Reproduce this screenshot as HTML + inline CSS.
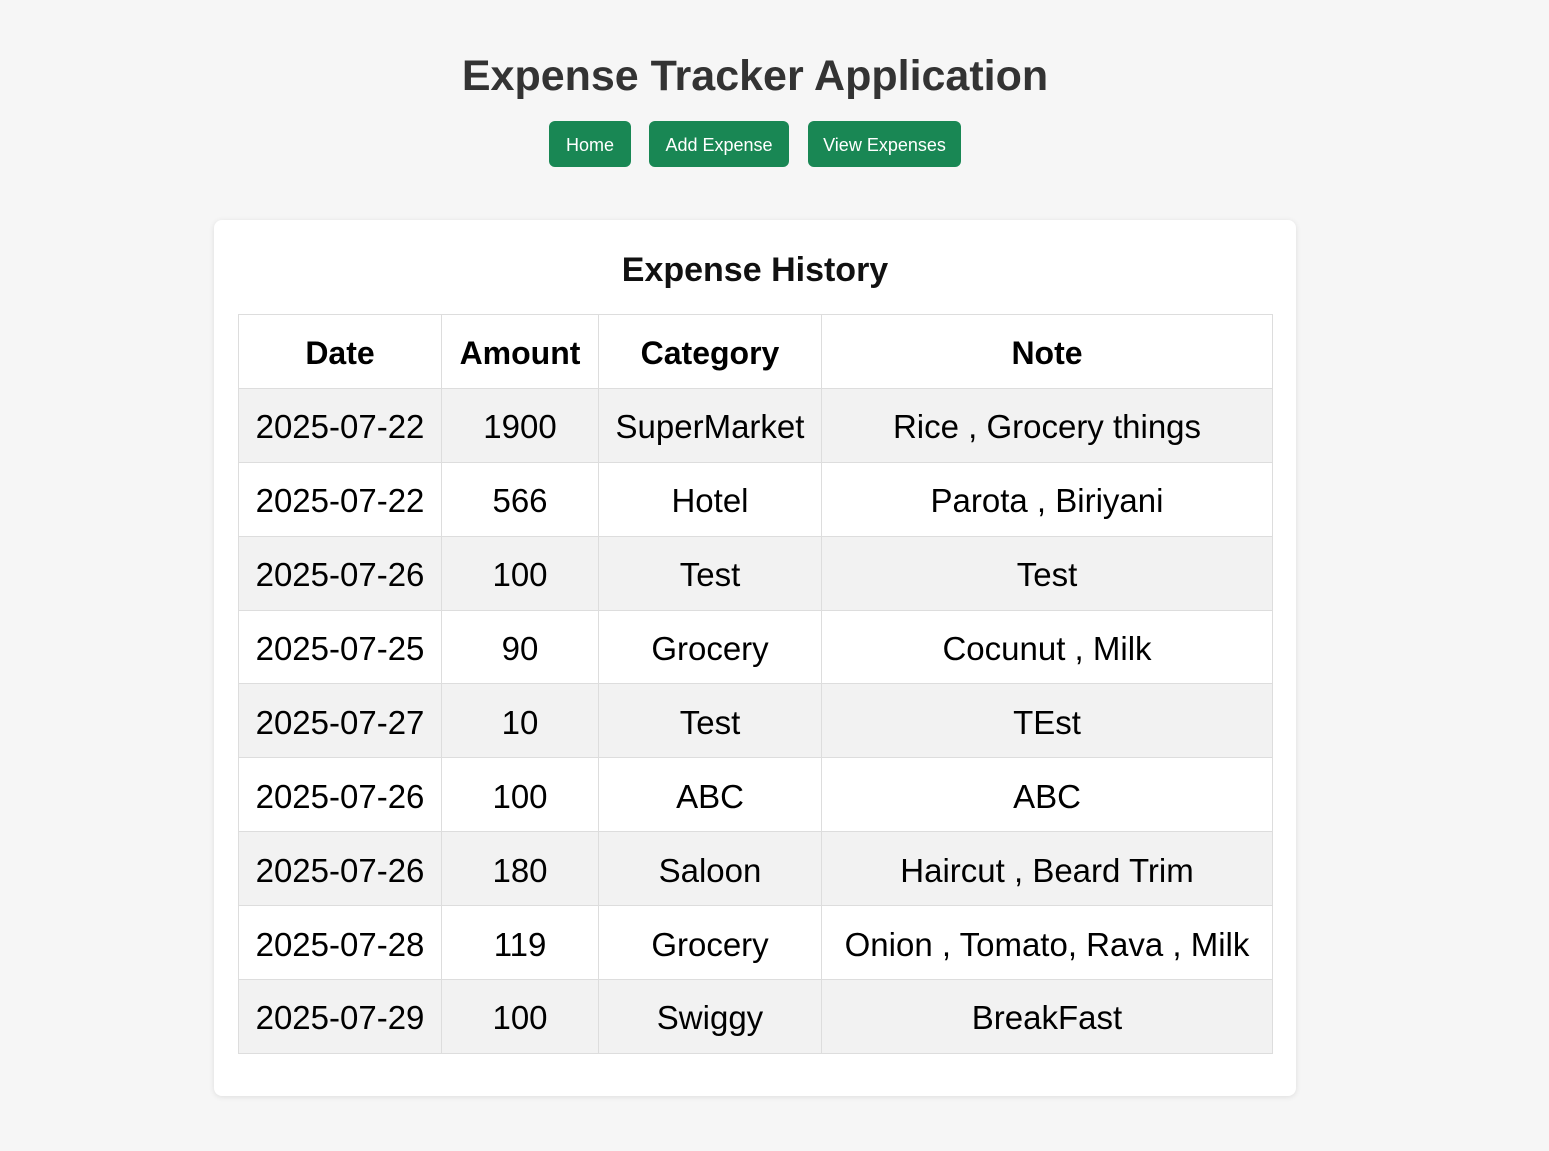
<!DOCTYPE html>
<html><head><meta charset="utf-8"><style>
html,body{margin:0;padding:0;background:#f6f6f6;font-family:"Liberation Sans",sans-serif;}
body{width:1549px;height:1151px;position:relative;overflow:hidden;}
h1{position:absolute;left:0;right:39px;top:47px;margin:0;text-align:center;font-size:43px;font-weight:bold;color:#333;line-height:58px;}
.btn{position:absolute;top:121px;height:46px;line-height:48px;background:#198754;color:#fff;border-radius:6px;font-size:18px;text-align:center;}
.card{position:absolute;left:214px;top:220px;width:1082px;height:876px;background:#fff;border-radius:8px;box-shadow:0 1px 6px rgba(0,0,0,.1);}
h2{position:absolute;left:0;right:39px;top:246px;margin:0;text-align:center;font-size:34px;font-weight:bold;color:#111;line-height:48px;}
table{position:absolute;left:238px;top:314px;border-collapse:collapse;table-layout:fixed;width:1034px;}
tr{height:73.9px;}
td,th{border:1px solid #ddd;padding:4px 0 0;line-height:38px;text-align:center;font-size:33px;white-space:nowrap;color:#000;}
th{font-size:32px;font-weight:bold;}
tr:nth-child(even) td{background:#f2f2f2;}
</style></head><body>
<h1>Expense Tracker Application</h1>
<div class="btn" style="left:549px;width:82px">Home</div>
<div class="btn" style="left:649px;width:140px">Add Expense</div>
<div class="btn" style="left:808px;width:153px">View Expenses</div>
<div class="card"></div>
<h2>Expense History</h2>
<table>
<colgroup><col style="width:203px"><col style="width:157px"><col style="width:223px"><col style="width:451px"></colgroup>
<tr><th>Date</th><th>Amount</th><th>Category</th><th>Note</th></tr>
<tr><td>2025-07-22</td><td>1900</td><td>SuperMarket</td><td>Rice , Grocery things</td></tr>
<tr><td>2025-07-22</td><td>566</td><td>Hotel</td><td>Parota , Biriyani</td></tr>
<tr><td>2025-07-26</td><td>100</td><td>Test</td><td>Test</td></tr>
<tr><td>2025-07-25</td><td>90</td><td>Grocery</td><td>Cocunut , Milk</td></tr>
<tr><td>2025-07-27</td><td>10</td><td>Test</td><td>TEst</td></tr>
<tr><td>2025-07-26</td><td>100</td><td>ABC</td><td>ABC</td></tr>
<tr><td>2025-07-26</td><td>180</td><td>Saloon</td><td>Haircut , Beard Trim</td></tr>
<tr><td>2025-07-28</td><td>119</td><td>Grocery</td><td>Onion , Tomato, Rava , Milk</td></tr>
<tr><td>2025-07-29</td><td>100</td><td>Swiggy</td><td>BreakFast</td></tr>
</table>
</body></html>
